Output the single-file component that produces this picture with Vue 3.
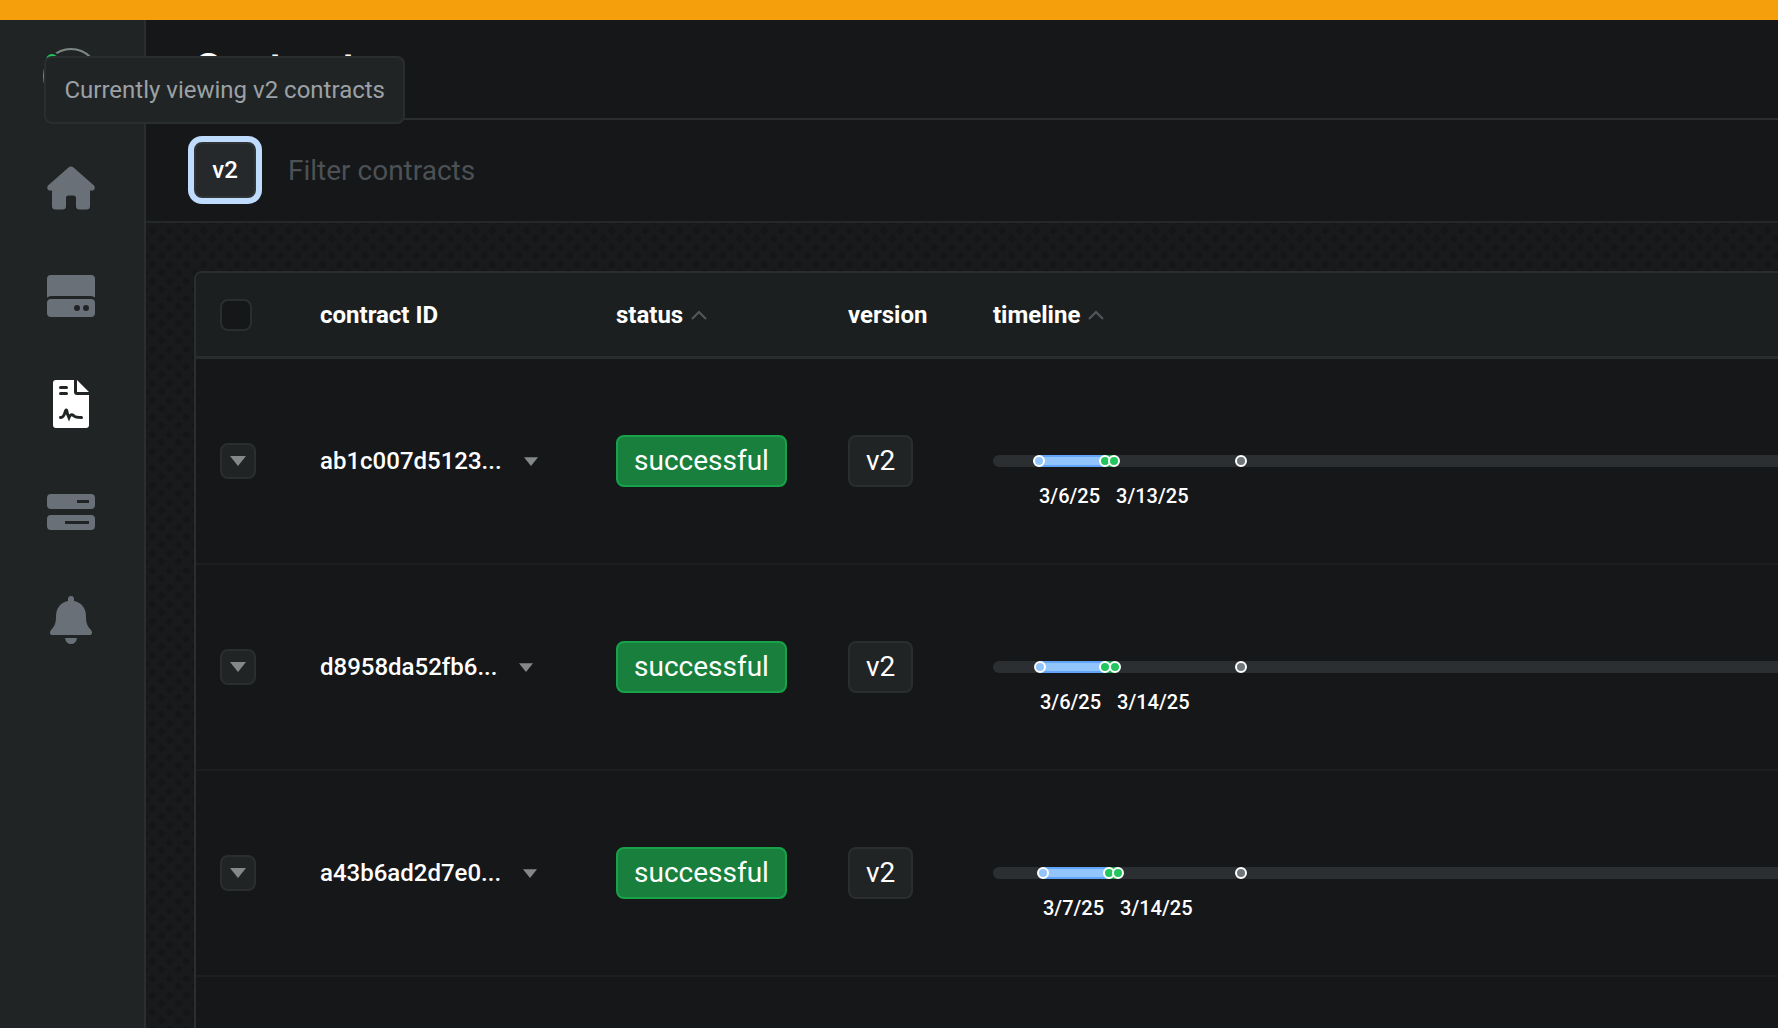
<script setup>
import { ref } from 'vue'

const filter = ref('')
const allSelected = ref(false)

const contracts = [
  { id: 'ab1c007d5123...', status: 'successful', version: 'v2', from: '3/6/25', to: '3/13/25', start: 46, proof: 112, end: 121, payout: 248 },
  { id: 'd8958da52fb6...', status: 'successful', version: 'v2', from: '3/6/25', to: '3/14/25', start: 47, proof: 112, end: 122, payout: 248 },
  { id: 'a43b6ad2d7e0...', status: 'successful', version: 'v2', from: '3/7/25', to: '3/14/25', start: 50, proof: 116, end: 125, payout: 248 },
]
</script>

<template>
  <div class="app">
    <div class="banner"></div>
    <div class="shell">
      <nav class="sidebar" aria-label="Main">
        <a href="#" class="avatar" aria-label="Status">
          <svg viewBox="0 0 56 56" width="56" height="56">
            <circle cx="28" cy="28" r="27" fill="none" stroke="#7d8784" stroke-width="2" />
            <circle cx="9" cy="12" r="8" fill="#212425" />
            <circle cx="9" cy="12" r="6" fill="#22c55e" />
          </svg>
        </a>
        <a href="#" class="nav-link" aria-label="Home">
          <svg viewBox="0 0 48 48" width="48" height="48">
            <path d="M21.500 3.500Q24 1.500 26.500 3.500L47 21.500Q49 24.500 46 26.500H43V42Q43 45.500 39.500 45.500H32.500Q29 45.500 29 42V34Q29 31.500 26.500 31.500H21.500Q19 31.500 19 34V42Q19 45.500 15.500 45.500H8.500Q5 45.500 5 42V26.500H2Q-1 24.500 1 21.500Z" />
          </svg>
        </a>
        <a href="#" class="nav-link" aria-label="Hosts">
          <svg viewBox="0 0 48 48" width="48" height="48">
            <path d="M4 3H44Q48 3 48 7V25.500Q46 24 44 24H4Q2 24 0 25.500V7Q0 3 4 3Z" />
            <path fill-rule="evenodd" d="M4 27H44Q48 27 48 31V41Q48 45 44 45H4Q0 45 0 41V31Q0 27 4 27ZM30 33a3 3 0 1 0 0 6a3 3 0 1 0 0-6ZM39 33a3 3 0 1 0 0 6a3 3 0 1 0 0-6Z" />
          </svg>
        </a>
        <a href="#" class="nav-link active" aria-label="Contracts" aria-current="page">
          <svg viewBox="0 0 48 48" width="48" height="48">
            <path d="M9 0H27V12Q27 15 30 15H42V45Q42 48 39 48H9Q6 48 6 45V3Q6 0 9 0ZM30 0L42 12H30Z" />
            <path d="M13.500 7.500H19.500M13.500 13.500H19.500M13.500 37.500C17 38 17.500 34 18.500 31C19.500 28 20 32 20.500 34L22 37.500C23 35 25 33.500 27 36Q28.500 37.500 34.500 37.500" fill="none" stroke="#212425" stroke-width="3" stroke-linecap="round" />
          </svg>
        </a>
        <a href="#" class="nav-link" aria-label="Configuration">
          <svg viewBox="0 0 48 48" width="48" height="48">
            <path fill-rule="evenodd" d="M4 6H44Q48 6 48 10V17Q48 21 44 21H4Q0 21 0 17V10Q0 6 4 6ZM30 12V15H42V12ZM4 27H44Q48 27 48 31V38Q48 42 44 42H4Q0 42 0 38V31Q0 27 4 27ZM18 33V36H42V33Z" />
          </svg>
        </a>
        <a href="#" class="nav-link" aria-label="Alerts">
          <svg viewBox="0 0 48 48" width="48" height="48">
            <path d="M21 5V3Q21 0 24 0T27 3V5C35 6.500 39 13 39 20C39 27 40 29.500 44 34Q45.500 36 45 37.500Q44.500 39 42.500 39H5.500Q3.500 39 3 37.500Q2.500 36 4 34C8 29.500 9 27 9 20C9 13 13 6.500 21 5ZM18 42H30Q29 48 24 48T18 42Z" />
          </svg>
        </a>
      </nav>

      <div class="main">
        <header class="topbar"><h1>Contracts</h1></header>
        <div class="filters">
          <div class="version-filter">
            <button type="button" class="version-button" aria-describedby="version-tip">v2</button>
            <div id="version-tip" role="tooltip" class="tooltip">Currently viewing v2 contracts</div>
          </div>
          <input v-model="filter" class="filter-input" type="text" placeholder="Filter contracts" aria-label="Filter contracts" />
        </div>

        <main class="content">
          <div class="panel">
            <table>
              <colgroup>
                <col class="col-select" />
                <col class="col-id" />
                <col class="col-status" />
                <col class="col-version" />
                <col />
              </colgroup>
              <thead>
                <tr>
                  <th class="select"><input v-model="allSelected" type="checkbox" aria-label="Select all contracts" /></th>
                  <th>contract ID</th>
                  <th>
                    <span class="sortable">status
                      <svg viewBox="0 0 16 10" width="16" height="10"><path d="M1 9L8 2L15 9" /></svg>
                    </span>
                  </th>
                  <th>version</th>
                  <th>
                    <span class="sortable">timeline
                      <svg viewBox="0 0 16 10" width="16" height="10"><path d="M1 9L8 2L15 9" /></svg>
                    </span>
                  </th>
                </tr>
              </thead>
              <tbody>
                <tr v-for="c in contracts" :key="c.id">
                  <td class="select">
                    <button type="button" class="row-menu" aria-label="Contract actions">
                      <svg viewBox="0 0 16 10" width="16" height="10"><path d="M0 0H16L8 10Z" /></svg>
                    </button>
                  </td>
                  <td>
                    <div class="id">
                      <span>{{ c.id }}</span>
                      <button type="button" class="id-menu" aria-label="Contract ID options">
                        <svg viewBox="0 0 16 10" width="14" height="9"><path d="M0 0H16L8 10Z" /></svg>
                      </button>
                    </div>
                  </td>
                  <td><span class="badge success">{{ c.status }}</span></td>
                  <td><span class="badge">{{ c.version }}</span></td>
                  <td>
                    <div class="timeline">
                      <div class="track">
                        <div class="span blue" :style="{ left: c.start + 'px', width: c.proof - c.start + 'px' }"></div>
                        <div class="span green" :style="{ left: c.proof + 'px', width: c.end - c.proof + 'px' }"></div>
                        <i class="dot start" :style="{ left: c.start + 'px' }"></i>
                        <i class="dot done" :style="{ left: c.proof + 'px' }"></i>
                        <i class="dot done" :style="{ left: c.end + 'px' }"></i>
                        <i class="dot" :style="{ left: c.payout + 'px' }"></i>
                      </div>
                      <div class="dates" :style="{ paddingLeft: c.start + 'px' }">
                        <span>{{ c.from }}</span><span>{{ c.to }}</span>
                      </div>
                    </div>
                  </td>
                </tr>
              </tbody>
            </table>
          </div>
        </main>
      </div>
    </div>
  </div>
</template>

<style>
body {
  background: #161719;
  overflow: hidden;
}
</style>

<style scoped>
* {
  box-sizing: border-box;
}

.app {
  display: flex;
  flex-direction: column;
  height: 100vh;
  color: #fff;
  font-family: Roboto, "Liberation Sans", sans-serif;
  font-size: 24px;
  line-height: 32px;
}

button,
input {
  font: inherit;
  color: inherit;
}

.banner {
  flex: none;
  height: 20px;
  background: #f59f0c;
}

.shell {
  flex: 1;
  display: flex;
  min-height: 0;
}

.sidebar {
  flex: none;
  display: flex;
  flex-direction: column;
  align-items: center;
  gap: 60px;
  width: 146px;
  padding: 28px 2px 0 0;
  background: #212425;
  border-right: 2px solid #2b2e2f;
}

.sidebar svg {
  display: block;
  overflow: visible;
}

.nav-link {
  fill: #697077;
}

.nav-link.active {
  fill: #fff;
}

.main {
  flex: 1;
  min-width: 0;
  display: flex;
  flex-direction: column;
}

.topbar {
  flex: none;
  display: flex;
  align-items: center;
  height: 100px;
  padding: 0 48px;
  border-bottom: 2px solid #2b2e30;
}

h1 {
  margin: 0;
  font-size: 42px;
  line-height: 48px;
  font-weight: 600;
}

.filters {
  flex: none;
  display: flex;
  align-items: center;
  gap: 16px;
  height: 103px;
  padding: 0 48px 2px;
  border-bottom: 2px solid #252829;
}

.version-filter {
  position: relative;
}

.version-button {
  display: block;
  height: 56px;
  width: 62px;
  padding: 0;
  font-weight: 500;
  color: #fff;
  background: #25292b;
  border: 2px solid #313436;
  border-radius: 8px;
  box-shadow: 0 0 0 6px #bfdbfe;
}

.tooltip {
  position: absolute;
  right: -149px;
  bottom: calc(100% + 18px);
  padding: 16px 18px;
  color: #9ba1a6;
  white-space: nowrap;
  background: #212425;
  border: 2px solid #2b2e2f;
  border-radius: 8px;
}

.filter-input {
  flex: 1;
  min-width: 0;
  padding: 10px 16px 8px;
  font-size: 28px;
  background: none;
  border: 0;
  outline: 0;
}

.filter-input::placeholder {
  color: #4c5155;
  opacity: 1;
}

.content {
  flex: 1;
  min-height: 0;
  padding: 48px 0 0 48px;
  background-color: #191a1c;
  background-image: radial-gradient(circle, #151618 3px, transparent 4px), radial-gradient(circle, #151618 3px, transparent 4px);
  background-size: 17px 17px;
  background-position: 15px 16px, 7px 7px;
}

.panel {
  height: 100%;
  overflow: hidden;
  background: #161719;
  border: 2px solid #2b2e2f;
  border-width: 2px 0 0 2px;
  border-radius: 8px 0 0 0;
}

table {
  width: 100%;
  table-layout: fixed;
  border-collapse: separate;
  border-spacing: 0;
}

.col-select {
  width: 124px;
}

.col-id {
  width: 296px;
}

.col-status {
  width: 232px;
}

.col-version {
  width: 145px;
}

th,
td {
  padding: 0;
  text-align: left;
  vertical-align: middle;
}

th {
  height: 86px;
  font-weight: 700;
  background: #1b1f1f;
  border-bottom: 3px solid #292c2d;
}

td {
  height: 206px;
  border-bottom: 2px solid #1c1e20;
}

.select {
  padding-left: 24px;
}

input[type='checkbox'] {
  display: block;
  appearance: none;
  width: 32px;
  height: 32px;
  margin: 0;
  background: #161719;
  border: 2px solid #2b2e2f;
  border-radius: 8px;
}

.sortable {
  display: flex;
  align-items: center;
  gap: 8px;
}

.sortable path {
  fill: none;
  stroke: #54585b;
  stroke-width: 2;
}

.row-menu {
  display: flex;
  align-items: center;
  justify-content: center;
  width: 36px;
  height: 36px;
  padding: 0;
  background: #212425;
  border: 2px solid #2b2e2f;
  border-radius: 8px;
}

.row-menu svg,
.id-menu svg {
  display: block;
  fill: #858889;
}

.id {
  display: flex;
  align-items: center;
  gap: 22px;
  font-weight: 500;
}

.id-menu {
  padding: 0;
  background: none;
  border: 0;
}

.badge {
  display: inline-block;
  padding: 8px 16px;
  font-size: 28px;
  background: #212425;
  border: 2px solid #2b2e2f;
  border-radius: 8px;
}

.badge.success {
  background: #187f3d;
  border-color: #16a34a;
}

.timeline {
  padding-top: 42px;
}

.track {
  position: relative;
  height: 12px;
  background: #2b2f31;
  border-radius: 6px 0 0 6px;
}

.span {
  position: absolute;
  top: 0;
  height: 12px;
  border: 2px solid;
  border-width: 2px 0;
}

.blue {
  background: #93c5fd;
  border-color: #60a5fa;
}

.green {
  background: #22c55e;
  border-color: #16a34a;
}

.dot {
  position: absolute;
  top: 0;
  width: 12px;
  height: 12px;
  margin-left: -6px;
  background: #6f767c;
  border: 2px solid #fff;
  border-radius: 50%;
}

.dot.start {
  background: #93c5fd;
}

.dot.done {
  background: #22c55e;
}

.dates {
  display: flex;
  gap: 16px;
  margin-top: 16px;
  font-size: 20px;
  font-weight: 500;
  line-height: 26px;
}
</style>
